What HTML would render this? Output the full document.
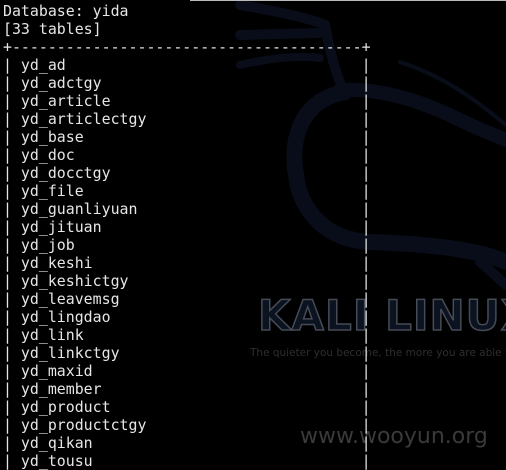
<!DOCTYPE html>
<html><head><meta charset="utf-8"><style>
html,body{margin:0;padding:0;background:#000;width:506px;height:470px;overflow:hidden;position:relative}
svg{position:absolute;left:0;top:0}
pre{position:absolute;left:3px;top:2px;margin:0;font-family:"DejaVu Sans Mono","Liberation Mono",monospace;font-size:14.9px;line-height:18px;color:#e6e6e6;white-space:pre}
.clip{position:absolute;left:240px;top:280px;width:266px;height:190px;overflow:hidden}
.k{position:absolute;left:18px;top:13px;font-family:"DejaVu Sans","Liberation Sans",sans-serif;font-weight:bold;font-size:42px;line-height:46px;color:#0b1220;-webkit-text-stroke:1.5px #464b55;letter-spacing:1px;white-space:nowrap}
.q{position:absolute;left:10px;top:67px;font-family:"DejaVu Sans","Liberation Sans",sans-serif;font-size:10.5px;color:#2e2e2e;white-space:nowrap}
.w{position:absolute;left:60px;top:144px;font-family:"DejaVu Sans","Liberation Sans",sans-serif;font-size:22px;color:#3a3a3a;white-space:nowrap}
.top{position:absolute;left:190px;top:0;width:316px;height:1px;background:#bbb}
</style></head><body>
<svg width="506" height="470">
<g fill="none" stroke="#080d19" stroke-linecap="round">
<path d="M345 92 C300 100 290 140 296 175 C300 210 325 240 370 242 C430 244 480 250 506 262" stroke-width="16"/>
<path d="M340 90 C380 88 420 100 460 120 C480 130 495 135 506 140" stroke-width="14"/>
<path d="M400 62 C440 75 470 95 506 125" stroke-width="4"/>
<path d="M240 5 C270 10 310 18 325 25 C330 50 335 75 345 92" stroke-width="10"/>
<path d="M240 35 L320 33" stroke-width="10"/>
<path d="M240 65 C270 58 300 55 320 58" stroke-width="8"/>
<path d="M480 262 C490 270 500 280 506 285" stroke-width="10"/>
</g>
</svg>
<div class="top"></div>
<div class="clip">
<div class="k">KALI LINUX</div>
<div class="q">The quieter you become, the more you are able to h</div>
<div class="w">www.wooyun.org</div>
</div>
<pre>Database: yida
[33 tables]
+---------------------------------------+
| yd_ad                                 |
| yd_adctgy                             |
| yd_article                            |
| yd_articlectgy                        |
| yd_base                               |
| yd_doc                                |
| yd_docctgy                            |
| yd_file                               |
| yd_guanliyuan                         |
| yd_jituan                             |
| yd_job                                |
| yd_keshi                              |
| yd_keshictgy                          |
| yd_leavemsg                           |
| yd_lingdao                            |
| yd_link                               |
| yd_linkctgy                           |
| yd_maxid                              |
| yd_member                             |
| yd_product                            |
| yd_productctgy                        |
| yd_qikan                              |
| yd_tousu                              |</pre>
</body></html>
